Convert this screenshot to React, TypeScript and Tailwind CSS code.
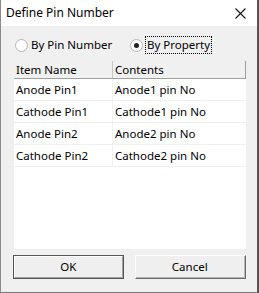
import React from "react"

const rows = [
  ["Anode Pin1", "Anode1 pin No"],
  ["Cathode Pin1", "Cathode1 pin No"],
  ["Anode Pin2", "Anode2 pin No"],
  ["Cathode Pin2", "Cathode2 pin No"],
]

function Radio({ checked }: { checked?: boolean }) {
  return (
    <span className="w-[13px] h-[13px] rounded-full border border-[#b5b5b5] bg-white flex items-center justify-center shrink-0">
      {checked && <span className="w-[5px] h-[5px] rounded-full bg-[#222]" />}
    </span>
  )
}

export default function App() {
  return (
    <div
      className="w-[259px] h-[293px] flex flex-col bg-[#f0f0f0] border-l border-r-2 border-b border-l-[#8a8a8a] border-r-[#555] border-b-[#777] text-[11.5px] text-black"
      style={{ fontFamily: '"Noto Sans", "Open Sans", sans-serif' }}
    >
      {/* Title bar */}
      <div className="h-[26px] bg-white flex items-center justify-between pl-[5px] pr-[10px] shrink-0">
        <span className="leading-none text-[12px]">Define Pin Number</span>
        <svg width="11" height="11" viewBox="0 0 11 11" className="mr-[1px]">
          <path d="M0.5 0.5 L10.5 10.5 M10.5 0.5 L0.5 10.5" stroke="#111" strokeWidth="1.1" />
        </svg>
      </div>

      <div className="flex flex-col flex-1 pl-[12px] pr-[11px] pb-[12px]">
        {/* Radio row */}
        <div className="flex items-center h-[18px] mt-[10px] pl-[2px]">
          <div className="w-[115px] flex items-center">
            <Radio />
            <span className="ml-[3px]">By Pin Number</span>
          </div>
          <Radio checked />
          <span className="ml-[2px] px-[1px] h-[18px] flex items-center border border-dotted border-black">By Property</span>
        </div>

        {/* List */}
        <div className="mt-[7px] ml-[1px] h-[188px] bg-white flex flex-col">
          <div className="h-[18px] flex bg-[#f0f0f0] border-b border-[#a0a0a0]">
            <div className="w-[99px] pl-[2px] flex items-center border-r border-[#c8c8c8]">Item Name</div>
            <div className="w-[133px] pl-[2px] flex items-center border-r border-[#a0a0a0]">Contents</div>
          </div>
          {rows.map(([a, b]) => (
            <div key={a} className="h-[22px] flex border-b border-[#f0f0f0]">
              <div className="w-[99px] pl-[2px] flex items-center border-r border-[#f0f0f0]">{a}</div>
              <div className="w-[133px] pl-[2px] flex items-center">{b}</div>
            </div>
          ))}
        </div>

        {/* Buttons */}
        <div className="flex mt-[6px] gap-[11px]">
          <button className="w-[111px] h-[24px] border border-[#555] bg-[#e1e1e1] flex items-center justify-center">
            <span className="w-full h-full flex items-center justify-center border-r border-b border-[#a0a0a0] border-t border-l border-t-white border-l-white bg-[#efefef]">OK</span>
          </button>
          <button className="w-[112px] h-[24px] border-t border-l border-white border-r border-b border-r-[#6a6a6a] border-b-[#6a6a6a] bg-[#efefef] flex items-center justify-center">
            <span className="w-full h-full flex items-center justify-center border-r border-b border-[#b8b8b8]">Cancel</span>
          </button>
        </div>
      </div>
    </div>
  )
}
